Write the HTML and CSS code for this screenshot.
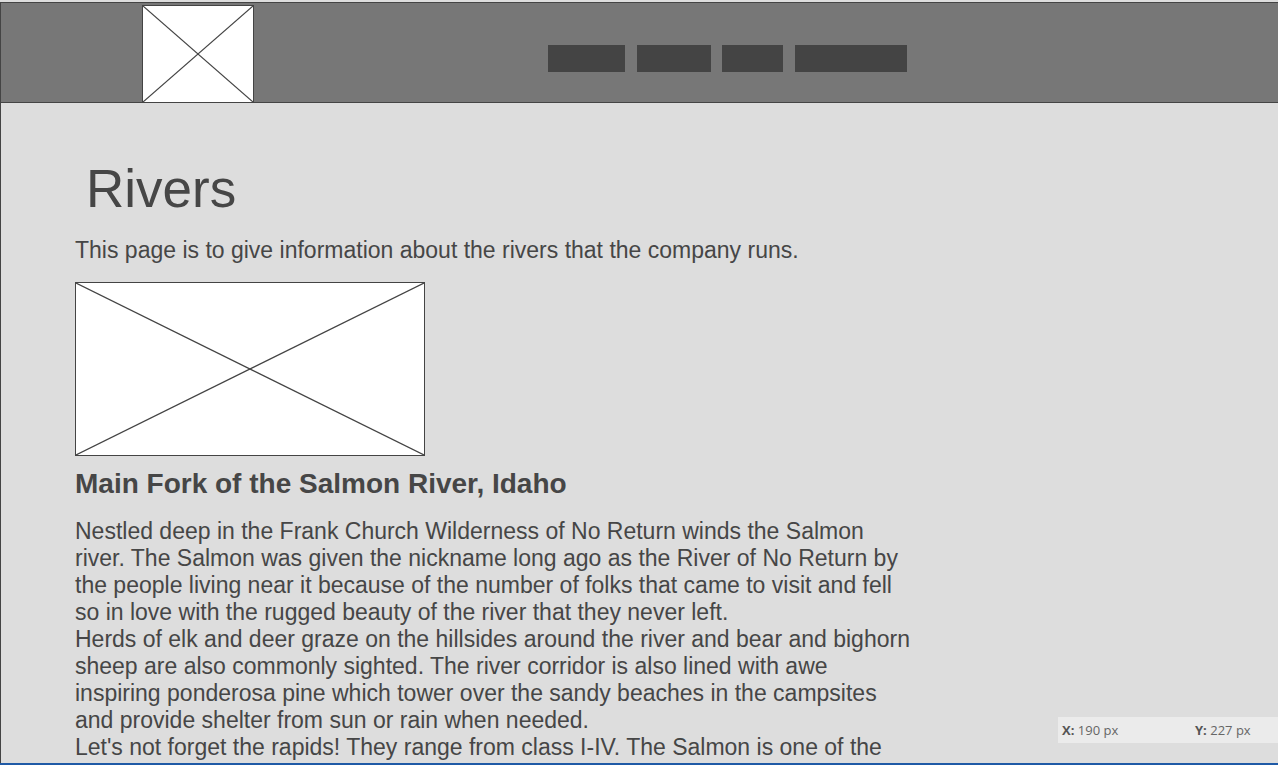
FILE: index.html
```html
<!DOCTYPE html>
<html lang="en">
<head>
<meta charset="utf-8">
<title>Rivers</title>
<link rel="stylesheet" href="styles.css">
</head>
<body>
<div class="page">
  <header class="header">
    <div class="logo">
      <svg class="xsvg" viewBox="0 0 100 100" preserveAspectRatio="none">
        <line x1="0" y1="0" x2="100" y2="100" vector-effect="non-scaling-stroke"/>
        <line x1="100" y1="0" x2="0" y2="100" vector-effect="non-scaling-stroke"/>
      </svg>
    </div>
    <nav class="nav">
      <a class="nav-item w1"></a>
      <a class="nav-item w2"></a>
      <a class="nav-item w3"></a>
      <a class="nav-item w4"></a>
    </nav>
  </header>
  <main class="main">
    <h1 class="title">Rivers</h1>
    <p class="intro">This page is to give information about the rivers that the company runs.</p>
    <div class="photo">
      <svg class="xsvg" viewBox="0 0 100 100" preserveAspectRatio="none">
        <line x1="0" y1="0" x2="100" y2="100" vector-effect="non-scaling-stroke"/>
        <line x1="100" y1="0" x2="0" y2="100" vector-effect="non-scaling-stroke"/>
      </svg>
    </div>
    <h2 class="river-name">Main Fork of the Salmon River, Idaho</h2>
    <div class="river-text">
      <p>Nestled deep in the Frank Church Wilderness of No Return winds the Salmon river. The Salmon was given the nickname long ago as the River of No Return by the people living near it because of the number of folks that came to visit and fell so in love with the rugged beauty of the river that they never left.</p>
      <p>Herds of elk and deer graze on the hillsides around the river and bear and bighorn sheep are also commonly sighted. The river corridor is also lined with awe inspiring ponderosa pine which tower over the sandy beaches in the campsites and provide shelter from sun or rain when needed.</p>
      <p>Let's not forget the rapids! They range from class I-IV. The Salmon is one of the most fun rivers to run in the whole country, with big wave trains and warm water.</p>
    </div>
  </main>
</div>
<div class="coords"><span class="coord"><b>X:</b> 190 px</span><span class="coord"><b>Y:</b> 227 px</span></div>
<div class="bottom-line"></div>
</body>
</html>
```
FILE: styles.css
```css
html, body {
  margin: 0;
  padding: 0;
}
body {
  background: #dddddd;
  font-family: "Liberation Sans", Arial, sans-serif;
  color: #464646;
  overflow: hidden;
  height: 765px;
}
.page {
  padding-top: 2px;
}
.header {
  display: flex;
  align-items: flex-start;
  height: 99px;
  background: #777777;
  border-top: 1px solid #444444;
  border-bottom: 1px solid #444444;
  border-left: 1px solid #444444;
}
.logo {
  margin-left: 141px;
  margin-top: 2px;
  width: 110px;
  height: 96px;
  background: #ffffff;
  border: 1px solid #444444;
  border-bottom: none;
}
.xsvg {
  display: block;
  width: 100%;
  height: 100%;
}
.xsvg line {
  stroke: #444444;
  stroke-width: 1.2;
}
.nav {
  display: flex;
  margin-left: 294px;
  margin-top: 42px;
}
.nav-item {
  display: block;
  height: 27px;
  background: #444444;
  margin-right: 12px;
}
.nav-item.w1 { width: 77px; }
.nav-item.w2 { width: 74px; margin-right: 11px; }
.nav-item.w3 { width: 61px; }
.nav-item.w4 { width: 112px; }
.main {
  border-left: 1px solid #444444;
  padding: 59px 0 0 74px;
  min-height: 700px;
}
.title {
  margin: 0 0 0 11px;
  font-size: 53px;
  font-weight: normal;
  line-height: 54px;
}
.intro {
  margin: 21px 0 0;
  font-size: 23px;
  line-height: 27px;
}
.photo {
  margin-top: 18px;
  width: 348px;
  height: 172px;
  background: #ffffff;
  border: 1px solid #444444;
}
.river-name {
  margin: 12px 0 0;
  font-size: 28px;
  font-weight: bold;
  line-height: 32px;
}
.river-text {
  margin-top: 18px;
  width: 840px;
}
.river-text p {
  margin: 0;
  font-size: 23px;
  line-height: 27px;
}
.coords {
  position: fixed;
  left: 1058px;
  top: 717px;
  width: 220px;
  height: 26px;
  background: #ebebeb;
  display: flex;
  align-items: center;
  font-family: "Open Sans", sans-serif;
  font-size: 13px;
  color: #666666;
}
.coord {
  width: 133px;
  padding-left: 4px;
}
.coord + .coord {
  width: auto;
  padding-left: 0;
}
.coord b {
  font-weight: bold;
  color: #555555;
}
.bottom-line {
  position: fixed;
  left: 0;
  right: 0;
  bottom: 0;
  height: 2px;
  background: #1f5aa6;
}
```
